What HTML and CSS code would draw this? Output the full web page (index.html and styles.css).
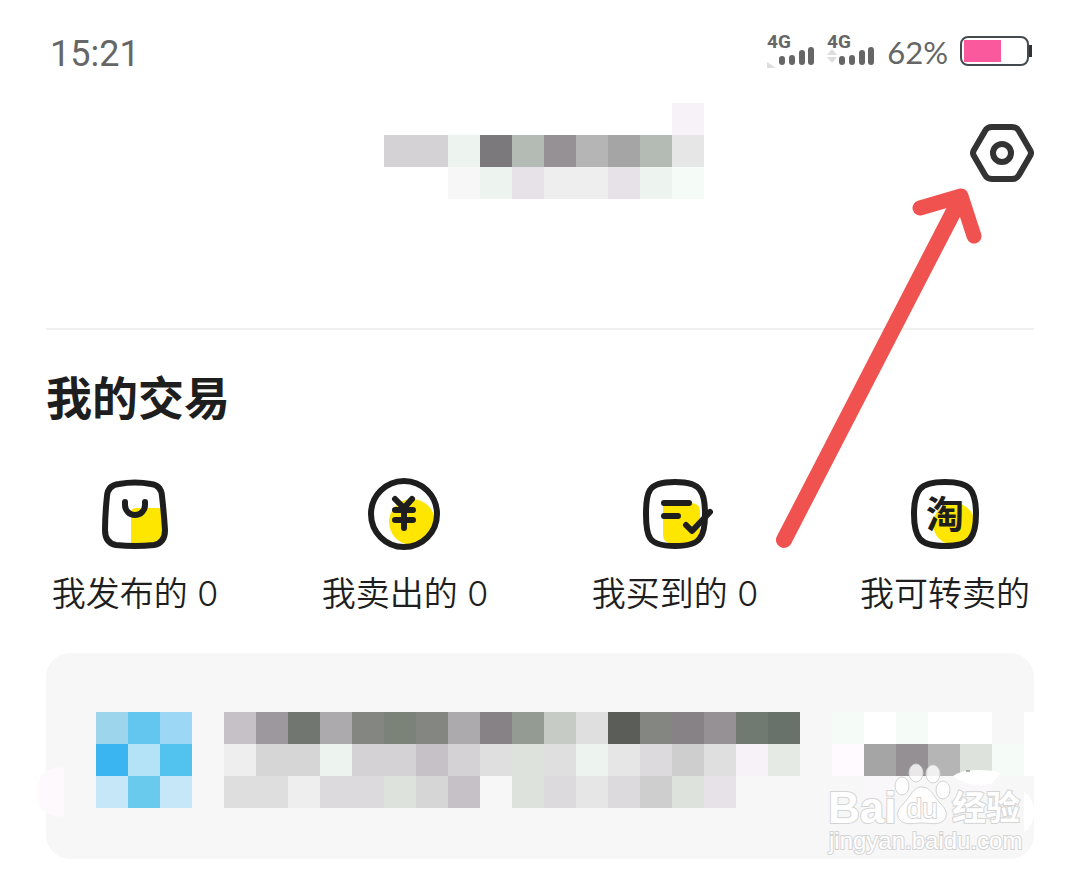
FILE: index.html
```
<!DOCTYPE html>
<html lang="zh-CN">
<head>
    <meta charset="UTF-8">
    <meta name="viewport" content="width=device-width, initial-scale=1.0">
    <title>我的交易</title>
    <link rel="stylesheet" href="styles.css">
</head>
<body>
    <div class="screen">
        <div class="status-bar">
            <span class="time">15:21</span>
            <div class="status-icons">
                <svg class="signal" viewBox="0 0 48 36">
                    <path class="hint" d="M0 29l9 6H0z"/>
                    <text x="0" y="15">4G</text>
                    <path class="bars" d="M15 26v3M25 25v4M35 20v9M44 17v12"/>
                </svg>
                <svg class="signal" viewBox="0 0 48 36">
                    <path class="hint" d="M5 16l5 6H0zM5 30l5-6H0z"/>
                    <text x="0" y="15">4G</text>
                    <path class="bars" d="M15 26v3M25 25v4M35 20v9M44 17v12"/>
                </svg>
                <span class="percent">62%</span>
                <svg class="battery" viewBox="0 0 72 30">
                    <rect x="1" y="1" width="67" height="28" rx="7" fill="none" stroke="#444a4e" stroke-width="2"/>
                    <rect x="4" y="4" width="37" height="22" fill="#fa5a9d"/>
                    <path d="M69 9h3v12h-3z" fill="#333"/>
                </svg>
            </div>
        </div>

        <header class="profile">
            <svg class="name-mosaic mosaic" viewBox="0 0 10 3">
                <rect x="9" y="0" width="1" height="1" fill="#f7f2f8"/>
                <rect x="0" y="1" width="2" height="1" fill="#d5d2d6"/>
                <rect x="2" y="1" width="1" height="1" fill="#edf3ee"/>
                <rect x="3" y="1" width="1" height="1" fill="#7c797c"/>
                <rect x="4" y="1" width="1" height="1" fill="#b4bab4"/>
                <rect x="5" y="1" width="1" height="1" fill="#959195"/>
                <rect x="6" y="1" width="1" height="1" fill="#b5b5b5"/>
                <rect x="7" y="1" width="1" height="1" fill="#a5a5a5"/>
                <rect x="8" y="1" width="1" height="1" fill="#b4bab4"/>
                <rect x="9" y="1" width="1" height="1" fill="#e6e6e6"/>
                <rect x="2" y="2" width="1" height="1" fill="#f7f7f7"/>
                <rect x="3" y="2" width="1" height="1" fill="#edf3ee"/>
                <rect x="4" y="2" width="1" height="1" fill="#e7e2e7"/>
                <rect x="5" y="2" width="2" height="1" fill="#eeeeee"/>
                <rect x="7" y="2" width="1" height="1" fill="#e7e2e7"/>
                <rect x="8" y="2" width="1" height="1" fill="#edf3ee"/>
                <rect x="9" y="2" width="1" height="1" fill="#f5fbf7"/>
            </svg>
            <button type="button" class="settings" aria-label="设置">
                <svg viewBox="0 0 64 60">
                    <path d="M22 4H42Q47 4 49 8L60 27Q62 30 60 33L49 52Q47 56 42 56H22Q17 56 15 52L4 33Q2 30 4 27L15 8Q17 4 22 4Z"/>
                    <circle cx="32" cy="30" r="9"/>
                </svg>
            </button>
        </header>

        <section class="trade">
            <h2>我的交易</h2>
            <nav class="trade-list">
                <a href="#">
                    <svg viewBox="0 0 76 76">
                        <path class="fill" d="M34 37q0-5 5-5h22q5 0 5 6v20q0 9-10 9H34z"/>
                        <path d="M10 20Q11 9 22 8Q38 5 54 8Q64 9 65 20Q67 38 68 54Q68 67 57 69Q38 71 19 69Q8 67 8 54Q8 39 10 20Z"/>
                        <path d="M28 26v3a10 10 0 0 0 20 0v-3"/>
                    </svg>
                    <span>我发布的 0</span>
                </a>
                <a href="#">
                    <svg viewBox="0 0 76 76">
                        <circle class="fill" cx="45" cy="46" r="23"/>
                        <circle cx="37" cy="38" r="33"/>
                        <path d="M28 23l9 9 8-9M28 34h18M28 44h18M37 32v20"/>
                    </svg>
                    <span>我卖出的 0</span>
                </a>
                <a href="#">
                    <svg viewBox="0 0 76 76">
                        <path class="fill" d="M26 27h28q9 0 9 9v22q-3 9-12 9H32q-6-2-6-8z"/>
                        <path d="M9 38Q9 20 13 14Q18 6 38 6Q58 6 63 14Q68 20 68 38Q68 56 63 62Q58 70 38 70Q18 70 13 62Q9 56 9 38Z"/>
                        <path d="M27 27h25M27 40h14M49 49l6 6 18-19"/>
                    </svg>
                    <span>我买到的 0</span>
                </a>
                <a href="#">
                    <svg viewBox="0 0 76 76">
                        <circle class="fill" cx="47" cy="48" r="21"/>
                        <path d="M7 38Q7 20 13 13Q19 6 38 6Q57 6 63 13Q69 20 69 38Q69 56 63 63Q57 70 38 70Q19 70 13 63Q7 56 7 38Z"/>
                        <text x="38" y="52">淘</text>
                    </svg>
                    <span>我可转卖的</span>
                </a>
            </nav>
        </section>

        <section class="notice">
            <svg class="smudge" viewBox="0 0 27 50">
                <path d="M27 0v50Q0 50 0 25T27 0z" fill="#fdf9fd"/>
            </svg>
            <svg class="thumb mosaic" viewBox="0 0 3 3">
                <rect x="0" y="0" width="1" height="1" fill="#9dd6ec"/>
                <rect x="1" y="0" width="1" height="1" fill="#63c6ef"/>
                <rect x="2" y="0" width="1" height="1" fill="#9cd7f6"/>
                <rect x="0" y="1" width="1" height="1" fill="#3ab5f1"/>
                <rect x="1" y="1" width="1" height="1" fill="#b4e3f8"/>
                <rect x="2" y="1" width="1" height="1" fill="#52c2ee"/>
                <rect x="0" y="2" width="1" height="1" fill="#c6e7f8"/>
                <rect x="1" y="2" width="1" height="1" fill="#6acaee"/>
                <rect x="2" y="2" width="1" height="1" fill="#c6e7f8"/>
            </svg>
            <svg class="message mosaic" viewBox="0 0 18 3">
                <rect x="0" y="0" width="1" height="1" fill="#c5c1c6"/>
                <rect x="1" y="0" width="1" height="1" fill="#9c989d"/>
                <rect x="2" y="0" width="1" height="1" fill="#717670"/>
                <rect x="3" y="0" width="1" height="1" fill="#adaaae"/>
                <rect x="4" y="0" width="1" height="1" fill="#848682"/>
                <rect x="5" y="0" width="1" height="1" fill="#7b8379"/>
                <rect x="6" y="0" width="1" height="1" fill="#848682"/>
                <rect x="7" y="0" width="1" height="1" fill="#adaaae"/>
                <rect x="8" y="0" width="1" height="1" fill="#868286"/>
                <rect x="9" y="0" width="1" height="1" fill="#949b93"/>
                <rect x="10" y="0" width="1" height="1" fill="#c6cbc5"/>
                <rect x="11" y="0" width="1" height="1" fill="#dfdfdf"/>
                <rect x="12" y="0" width="1" height="1" fill="#5a5d58"/>
                <rect x="13" y="0" width="1" height="1" fill="#848682"/>
                <rect x="14" y="0" width="1" height="1" fill="#868286"/>
                <rect x="15" y="0" width="1" height="1" fill="#959195"/>
                <rect x="16" y="0" width="1" height="1" fill="#717a71"/>
                <rect x="17" y="0" width="1" height="1" fill="#69726a"/>
                <rect x="0" y="1" width="1" height="1" fill="#eeeeee"/>
                <rect x="1" y="1" width="2" height="1" fill="#d6d6d6"/>
                <rect x="3" y="1" width="1" height="1" fill="#edf3ee"/>
                <rect x="4" y="1" width="2" height="1" fill="#d5d2d6"/>
                <rect x="6" y="1" width="1" height="1" fill="#c5c1c6"/>
                <rect x="7" y="1" width="1" height="1" fill="#d5d2d6"/>
                <rect x="8" y="1" width="1" height="1" fill="#dfdfdf"/>
                <rect x="9" y="1" width="1" height="1" fill="#dde3dc"/>
                <rect x="10" y="1" width="1" height="1" fill="#dfdfdf"/>
                <rect x="11" y="1" width="1" height="1" fill="#edf3ee"/>
                <rect x="12" y="1" width="1" height="1" fill="#e6e6e6"/>
                <rect x="13" y="1" width="1" height="1" fill="#dddade"/>
                <rect x="14" y="1" width="1" height="1" fill="#cecece"/>
                <rect x="15" y="1" width="1" height="1" fill="#dfdfdf"/>
                <rect x="16" y="1" width="1" height="1" fill="#f7f2f8"/>
                <rect x="17" y="1" width="1" height="1" fill="#e5eae5"/>
                <rect x="0" y="2" width="2" height="1" fill="#dedede"/>
                <rect x="2" y="2" width="1" height="1" fill="#eeeeee"/>
                <rect x="3" y="2" width="2" height="1" fill="#dddade"/>
                <rect x="5" y="2" width="1" height="1" fill="#dde3dc"/>
                <rect x="6" y="2" width="1" height="1" fill="#d6d6d6"/>
                <rect x="7" y="2" width="1" height="1" fill="#c5c1c6"/>
                <rect x="9" y="2" width="1" height="1" fill="#dde3dc"/>
                <rect x="10" y="2" width="1" height="1" fill="#dddade"/>
                <rect x="11" y="2" width="1" height="1" fill="#e6e6e6"/>
                <rect x="12" y="2" width="1" height="1" fill="#dddade"/>
                <rect x="13" y="2" width="1" height="1" fill="#cecece"/>
                <rect x="14" y="2" width="1" height="1" fill="#dde3dc"/>
                <rect x="15" y="2" width="1" height="1" fill="#e7e2e7"/>
            </svg>
            <svg class="action" viewBox="0 0 202 120">
                <g class="mosaic">
                    <rect x="0" y="0" width="32" height="32" fill="#f5fbf6"/>
                    <rect x="32" y="0" width="32" height="32" fill="#ffffff"/>
                    <rect x="64" y="0" width="32" height="32" fill="#f5fbf6"/>
                    <rect x="96" y="0" width="64" height="32" fill="#ffffff"/>
                    <rect x="0" y="32" width="32" height="32" fill="#fefaff"/>
                    <rect x="32" y="32" width="32" height="32" fill="#a5a5a5"/>
                    <rect x="64" y="32" width="32" height="32" fill="#949094"/>
                    <rect x="96" y="32" width="32" height="32" fill="#b5b5b5"/>
                    <rect x="128" y="32" width="32" height="32" fill="#dde3dc"/>
                    <rect x="160" y="32" width="32" height="32" fill="#f5fbf6"/>
                    <rect x="32" y="64" width="32" height="32" fill="#faf7fa"/>
                    <rect x="128" y="64" width="32" height="16" fill="#faf7fa"/>
                    <rect x="192" y="0" width="10" height="64" fill="#ffffff"/>
                </g>
                <path d="M121 64q8-6 24-6 16 0 24 3l-10 11q-24 4-38-8z" fill="#fff"/>
                <path d="M134 59h4" stroke="#666"/>
                <path d="M192 80q10 6 10 20t-10 20z" fill="#fff"/>
            </svg>
        </section>

        <svg class="arrow" viewBox="0 0 210 362">
            <path class="shaft" d="M9 353L182 18"/>
            <path class="head" d="M145 21L186 9L199 49"/>
            <path class="joint" d="M165 20L186 9L193 30L184 30L178 21z"/>
        </svg>

        <svg class="watermark" viewBox="0 0 206 100">
            <g class="paw">
                <ellipse cx="74" cy="27" rx="7" ry="9"/>
                <ellipse cx="88" cy="14" rx="7" ry="9"/>
                <ellipse cx="105" cy="15" rx="7" ry="9"/>
                <ellipse cx="115" cy="31" rx="7" ry="9"/>
                <path d="M94 28c9 0 11 9 18 16 6 6 8 11 5 16-5 7-14 4-23 4s-18 3-23-4c-3-5-1-10 5-16 7-7 9-16 18-16z"/>
            </g>
            <text class="brand" x="0" y="64">Bai</text>
            <text class="du" x="94" y="59">du</text>
            <text class="jingyan" x="124" y="61">经验</text>
            <text class="site" x="1" y="90">jingyan.baidu.com</text>
        </svg>
    </div>
</body>
</html>
```
FILE: styles.css
```
* {
    box-sizing: border-box;
}
body {
    margin: 0;
    background-color: #fff;
    color: #1e1e1e;
    font-family: Roboto, "Noto Sans CJK SC", sans-serif;
}
svg {
    display: block;
    flex: none;
}
.screen {
    position: relative;
    padding: 34px 0 19px;
    overflow: hidden;
}
.mosaic {
    shape-rendering: crispEdges;
}

/* status bar */
.status-bar {
    display: flex;
    justify-content: space-between;
    align-items: center;
    height: 34px;
    padding: 0 48px 0 50px;
    color: #666;
}
.time {
    padding-top: 6px;
    font-size: 36px;
    line-height: 38px;
}
.status-icons {
    display: flex;
    align-items: center;
    gap: 12px;
}
.signal {
    width: 48px;
    height: 36px;
    overflow: visible;
}
.signal text {
    font-size: 19px;
    font-weight: 700;
    fill: #666;
}
.signal .bars {
    stroke: #666;
    stroke-width: 6;
    stroke-linecap: round;
}
.signal .hint {
    fill: #ddd;
}
.percent {
    padding-top: 2px;
    font-family: Lato, sans-serif;
    font-size: 31px;
}
.battery {
    width: 72px;
    height: 30px;
}

/* profile */
.profile {
    display: grid;
    grid-template-columns: 1fr auto 1fr;
    align-items: center;
    margin: 35px 46px 0;
    padding-bottom: 129px;
    border-bottom: 2px solid #efefef;
}
.name-mosaic {
    grid-column: 2;
    width: 320px;
    height: 96px;
    margin-left: 8px;
}
.settings {
    justify-self: end;
    padding: 4px 0 0;
    border: none;
    background: none;
    cursor: pointer;
}
.settings svg {
    width: 64px;
    height: 60px;
    fill: none;
    stroke: #333;
    stroke-width: 6;
}

/* my trades */
.trade h2 {
    margin: 39px 46px 47px;
    font-size: 46px;
    line-height: 60px;
    font-weight: 700;
}
.trade-list {
    display: grid;
    grid-template-columns: repeat(4, 1fr);
}
.trade-list a {
    display: flex;
    flex-direction: column;
    align-items: center;
    gap: 20px;
    color: #1e1e1e;
    font-family: Inter, "Noto Sans CJK SC", sans-serif;
    font-size: 34px;
    font-weight: 350;
    line-height: 44px;
    text-decoration: none;
    white-space: nowrap;
}
.trade-list svg {
    width: 76px;
    height: 76px;
    fill: none;
    stroke: #1e1e1e;
    stroke-width: 6;
    stroke-linecap: round;
    stroke-linejoin: round;
}
.trade-list .fill {
    fill: #ffe600;
    stroke: none;
}
.trade-list text {
    font-size: 38px;
    font-weight: 700;
    text-anchor: middle;
    fill: #1e1e1e;
    stroke: none;
}

/* notice card */
.notice {
    position: relative;
    display: flex;
    gap: 32px;
    height: 206px;
    margin: 37px 46px 0;
    padding: 59px 0 0 50px;
    border-radius: 24px;
    background-color: #f7f7f7;
}
.smudge {
    position: absolute;
    left: -9px;
    top: 114px;
    width: 27px;
    height: 50px;
}
.thumb {
    width: 96px;
    height: 96px;
}
.message {
    width: 576px;
    height: 96px;
}
.action {
    width: 202px;
    height: 120px;
    margin-left: auto;
}

/* overlays */
.arrow {
    position: absolute;
    top: 187px;
    right: 95px;
    width: 210px;
    height: 362px;
    fill: none;
    stroke: #f0524f;
    stroke-width: 15;
    stroke-linecap: round;
    stroke-linejoin: round;
    pointer-events: none;
}
.arrow .shaft {
    stroke-width: 16;
}
.arrow .joint {
    fill: #f0524f;
    stroke: none;
}
.watermark {
    position: absolute;
    right: 46px;
    bottom: 19px;
    width: 206px;
    height: 100px;
    overflow: visible;
    pointer-events: none;
}
.watermark text {
    fill: #fff;
    stroke: #d4d4d4;
    stroke-width: 2;
    paint-order: stroke;
    font-family: "Liberation Sans", "Noto Sans CJK SC", sans-serif;
}
.paw {
    fill: #fff;
    fill-opacity: 0.8;
    stroke: #d4d4d4;
}
.watermark .brand {
    font-size: 44px;
    font-weight: 700;
}
.watermark .du {
    font-size: 28px;
    text-anchor: middle;
}
.watermark .jingyan {
    font-size: 34px;
    font-weight: 700;
}
.watermark .site {
    font-size: 24px;
}
```
